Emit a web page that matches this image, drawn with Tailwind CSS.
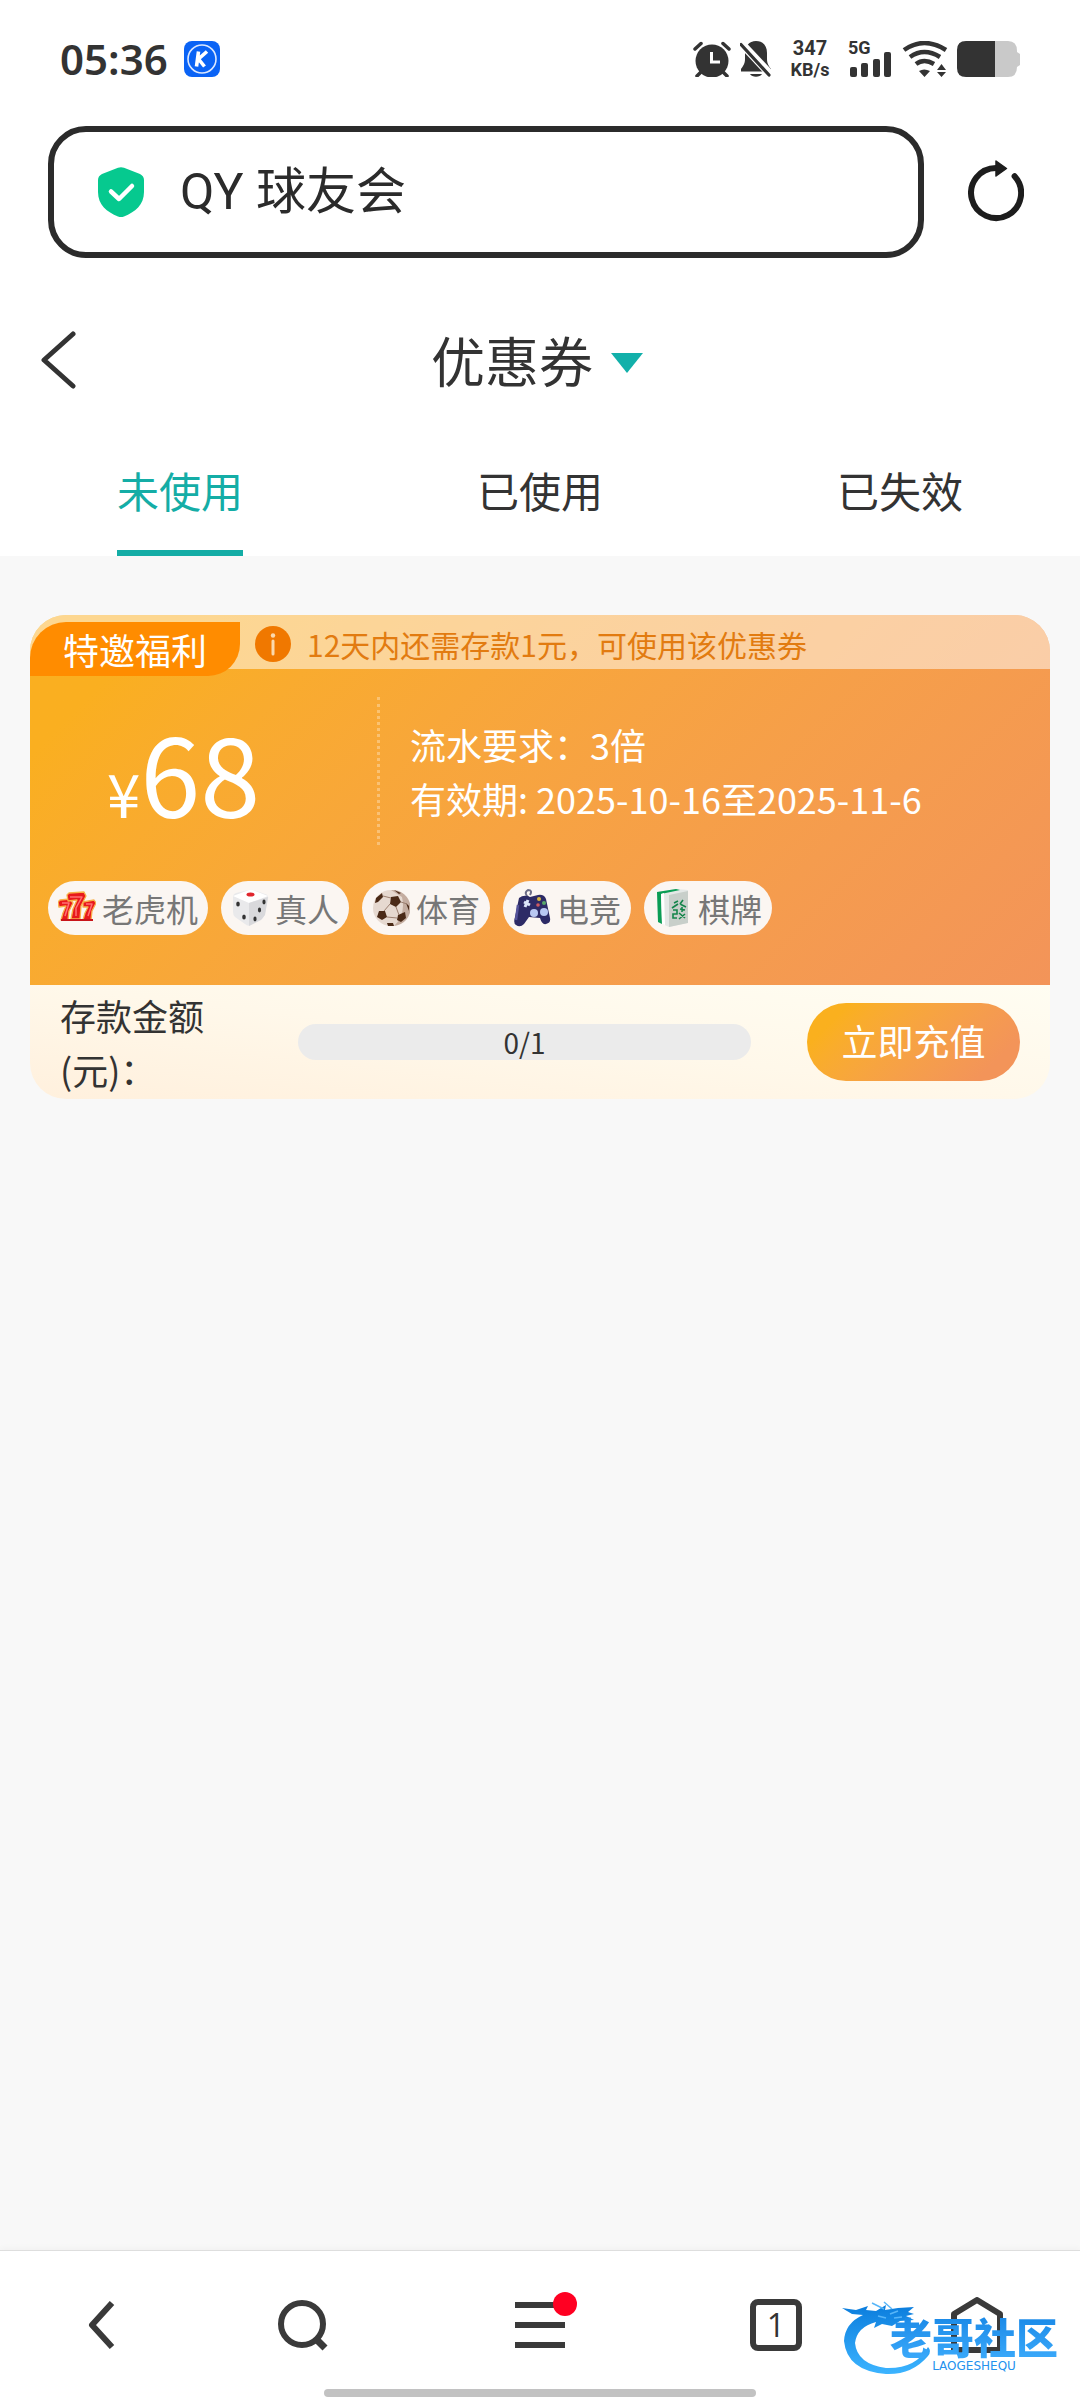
<!DOCTYPE html>
<html lang="zh-CN">
<head>
  <meta charset="UTF-8" />
  <meta name="viewport" content="width=device-width, initial-scale=1.0"/>
  <title>优惠券</title>
  <script src="https://cdn.jsdelivr.net/npm/@tailwindcss/browser@4"></script>
</head>
<body class="min-h-screen flex flex-col bg-[#f8f8f8] text-[#333] font-['Noto_Sans_CJK_SC',sans-serif]">

  <header class="bg-white">

    <!-- Status bar -->
    <div class="flex items-center justify-between pt-9 px-[60px]">
      <div class="flex items-center gap-4">
        <span class="font-['Noto_Sans',sans-serif] font-semibold text-[42px] leading-[45px]">05:36</span>
        <svg class="size-9" viewBox="0 0 36 36">
          <rect width="36" height="36" rx="8" fill="#0a63f5"/>
          <circle cx="18" cy="18" r="14" fill="none" stroke="#dbe8ff" stroke-width="1.6"/>
          <path d="M14.5 10.5L12.5 25.5M23 10.5L14.5 18L20.5 25.5" fill="none" stroke="#fff" stroke-width="3.6"/>
        </svg>
      </div>
      <div class="flex items-center font-['Roboto',sans-serif] font-bold">
        <svg class="w-[38px] h-9" viewBox="0 0 38 36" fill="#333">
          <circle cx="19" cy="20" r="16.5"/>
          <path d="M2 8L8 2.5M36 8L30 2.5M8 31L4 35M30 31L34 35" stroke="#333" stroke-width="3.5" stroke-linecap="round"/>
          <path d="M18.5 11V21H27" fill="none" stroke="#fff" stroke-width="3"/>
        </svg>
        <svg class="ml-[9px] w-8 h-9" viewBox="0 0 32 36" fill="#333">
          <path d="M16 0C9 0 5 5 5 12V18C5 23 3 25 1 28V30.5H31V28C29 25 27 23 27 18V12C27 5 23 0 16 0ZM10 33H22C20 36.5 12 36.5 10 33Z"/>
          <path d="M0 1L30 33" stroke="#fff" stroke-width="8"/>
          <path d="M1 3.5L29 34" stroke="#333" stroke-width="3.2" stroke-linecap="round"/>
        </svg>
        <div class="ml-4 w-[44px] flex flex-col items-center leading-[22px]">
          <span class="text-[20px]">347</span>
          <span class="text-[18px]">KB/s</span>
        </div>
        <div class="relative ml-4 w-[44px] h-9">
          <svg class="w-[44px] h-9" viewBox="0 0 44 36" fill="#333">
            <rect x="2" y="26" width="7" height="10" rx="2"/>
            <rect x="13" y="22" width="7" height="14" rx="2"/>
            <rect x="25" y="18" width="7" height="18" rx="2"/>
            <rect x="36" y="11" width="7" height="25" rx="2"/>
          </svg>
          <span class="absolute left-0 top-0 text-[18px] leading-[14px]">5G</span>
        </div>
        <svg class="ml-[10px] w-[46px] h-9" viewBox="0 0 46 36" fill="none" stroke="#333" stroke-width="4.5">
          <path d="M2 9Q22 -5 44 9M8 16Q22 6 38 16M14 23Q22 17 32 23"/>
          <path d="M17 30Q22 27 28 30L22.5 36ZM35 29H44L39.5 23ZM35 31H44L39.5 36Z" fill="#333" stroke="none"/>
        </svg>
        <svg class="ml-[9px] w-[63px] h-9" viewBox="0 0 63 36">
          <path d="M38 0H51Q60 0 60 10V11L63 13V24L60 26Q60 36 51 36H38Z" fill="#c9c9c9"/>
          <path d="M38 0H9Q0 0 0 9V27Q0 36 9 36H38Z" fill="#333"/>
        </svg>
      </div>
    </div>

    <!-- Address bar -->
    <div class="flex items-center gap-[44px] mt-[45px] pl-12 pr-14">
      <label for="address" class="flex-1 flex items-center gap-9 h-[132px] pl-11 border-6 border-[#2b2b2b] rounded-[38px]">
        <svg class="w-[46px] h-[50px]" viewBox="0 0 46 50">
          <path d="M20 .8Q23 -.5 26 .8L42 7Q46 9 46 13V25C46 38 37 45 26 49.5Q23 50.5 20 49.5C9 45 0 38 0 25V13Q0 9 4 7Z" fill="#06c98f"/>
          <path d="M13 24.5L21 32L34 19" fill="none" stroke="#fff" stroke-width="4.5" stroke-linecap="round" stroke-linejoin="round"/>
        </svg>
        <input id="address" type="text" value="QY 球友会" aria-label="地址栏" class="flex-1 min-w-0 font-['Roboto','Noto_Sans_CJK_SC',sans-serif] text-[50px] leading-[72px] text-[#2b2b2b] outline-none">
      </label>
      <button aria-label="刷新">
        <svg class="w-14 h-16" viewBox="0 0 56 64">
          <path d="M28 8A25 25 0 1 0 46.600 16.200" fill="none" stroke="#1d1d1d" stroke-width="6" stroke-linecap="round"/>
          <path d="M28 1L38.5 8.5L28 16Z" fill="#1d1d1d" stroke="#1d1d1d" stroke-width="1.5" stroke-linejoin="round"/>
        </svg>
      </button>
    </div>

    <!-- Title -->
    <div class="flex items-center h-[120px] mt-[42px]">
      <button aria-label="返回" class="w-24 pl-10">
        <svg class="w-9 h-[58px]" viewBox="0 0 36 58" fill="none" stroke="#333" stroke-width="5" stroke-linecap="round" stroke-linejoin="round">
          <path d="M33 3L4 29L33 55"/>
        </svg>
      </button>
      <div class="flex-1 flex justify-center">
        <button class="flex items-center gap-[18px]">
          <span class="text-[54px] leading-[78px]">优惠券</span>
          <svg class="mt-1.5 w-8 h-5" viewBox="0 0 32 20"><path d="M0 0H32L16 20Z" fill="#12b0aa"/></svg>
        </button>
      </div>
      <div class="w-[102px]"></div>
    </div>

    <!-- Tabs -->
    <nav class="grid grid-cols-3 justify-items-center text-[42px] leading-[64px]">
      <button class="pt-[38px] pb-7 border-b-6 border-[#14ada6] text-[#14ada6]">未使用</button>
      <button class="pt-[38px] pb-7 border-b-6 border-transparent">已使用</button>
      <button class="pt-[38px] pb-7 border-b-6 border-transparent">已失效</button>
    </nav>
  </header>

  <main class="flex-1 px-[30px] pt-[59px]">

    <!-- Coupon -->
    <article class="rounded-[36px] overflow-hidden">
      <div class="relative bg-linear-135 from-[#faaf20] from-10% to-[#f39459] text-white">
        <div class="flex items-center h-[54px] pt-[3px] pl-[225px] bg-white/50 text-[#e27b10]">
          <svg class="size-9" viewBox="0 0 36 36">
            <circle cx="18" cy="18" r="18" fill="#f07800"/>
            <path d="M18 15V28" stroke="#fbd9ad" stroke-width="3" stroke-linecap="round"/>
            <circle cx="18" cy="9.5" r="2.2" fill="#fbd9ad"/>
          </svg>
          <p class="ml-4 text-[30px] leading-[54px]">12天内还需存款1元，可使用该优惠券</p>
        </div>
        <span class="absolute left-0 top-[7px] w-[210px] h-[54px] pl-[33px] bg-[#ff8c00] rounded-tl-[36px] rounded-br-[32px] text-[36px] leading-[54px]">特邀福利</span>

        <div class="flex h-[148px] mt-7">
          <div class="w-[350px] pl-[77px] flex items-baseline border-r-3 border-dotted border-white/30">
            <span class="text-[60px]">¥</span>
            <span class="text-[108px] leading-[148px]">68</span>
          </div>
          <div class="flex-1 flex flex-col justify-center pl-[30px] text-[36px] leading-[54px]">
            <p>流水要求：3倍</p>
            <p>有效期: 2025-10-16至2025-11-6</p>
          </div>
        </div>

        <ul class="flex gap-[13px] mt-9 pl-[18px] pb-[50px] text-[32px] leading-[54px] text-[#777]">
          <li class="flex items-center gap-1.5 px-2.5 rounded-full bg-[#fbf6f2]">
            <svg class="size-[38px]" viewBox="0 0 38 38" stroke-linejoin="round">
              <g fill="#e8191c" stroke="#f8b04a" stroke-width="1.3">
                <path d="M0 13L2 11L12 10L15 14L11 22L10 31H3L5 24L8 17L1 18Z"/>
                <path d="M25 13L36 11L38 14L34 22L33 31H25L27 24L30 18L25 18Z"/>
                <path d="M9 6L11 4L26 3L28 7L23 17L22 30H13L15 20L19 11L10 12Z"/>
              </g>
              <path d="M12 8H24L18 19V27M4 14H11L7 27M28 15H34L30 27" stroke="#ff6f72" stroke-width="1.5" fill="none"/>
              <path d="M3 31H35" stroke="#c8141a" stroke-width="2"/>
            </svg>
            <span>老虎机</span>
          </li>
          <li class="flex items-center gap-1.5 px-2.5 rounded-full bg-[#fbf6f2]">
            <svg class="size-[38px]" viewBox="0 0 38 38">
              <path d="M2 8Q2 5 5 4L18 1Q20 0 22 1L34 5Q38 6 37 10L34 25Q33 28 31 30L20 36Q17 38 14 35L4 28Q2 26 2 23Z" fill="#e9e9eb"/>
              <path d="M2 7L18 1Q20 0 22 1L37 7L18 14Z" fill="#fff"/>
              <path d="M18 14L37 8L34 26L30 31L18 37Z" fill="#d9d9dc"/>
              <ellipse cx="19.5" cy="5.5" rx="4" ry="2" fill="#e0262e"/>
              <g fill="#333"><ellipse cx="7" cy="15" rx="1.8" ry="2.6"/><ellipse cx="13" cy="28" rx="1.8" ry="2.6"/><ellipse cx="33" cy="13" rx="1.6" ry="2.4"/><ellipse cx="28.5" cy="21" rx="1.6" ry="2.4"/><ellipse cx="24" cy="30" rx="1.6" ry="2.4"/></g>
            </svg>
            <span>真人</span>
          </li>
          <li class="flex items-center gap-1.5 px-2.5 rounded-full bg-[#fbf6f2]">
            <svg class="size-[38px]" viewBox="0 0 38 38">
              <circle cx="19" cy="19" r="18" fill="#e6d9d0"/>
              <path d="M19 1A18 18 0 0 1 22 37Q34 26 30 8Z" fill="#c4ada0"/>
              <g fill="#4a2a17"><path d="M19 8L26 7L29 13L24 18L18 15Z"/><path d="M7 22L13 22L15 28L10 31L5 28Z"/><path d="M26 26L33 23L34 29L29 33L25 31Z"/><path d="M4 9L10 4L11 8L6 13L3 14Z"/><path d="M15 34L21 34L22 37L16 37Z"/><path d="M22 1L29 4L27 5Z"/><path d="M34 14L37 17V22Z"/></g>
              <path d="M11 7L19 9M18 15L12 22M24 18L27 26M29 13L35 15M15 28L25 29" stroke="#9b7f70" fill="none"/>
            </svg>
            <span>体育</span>
          </li>
          <li class="flex items-center gap-1.5 px-2.5 rounded-full bg-[#fbf6f2]">
            <svg class="size-[38px]" viewBox="0 0 38 38">
              <path d="M16 9Q10 4 15 1Q20 1 17 6" fill="none" stroke="#6c6c86" stroke-width="2"/>
              <path d="M6 9Q11 5 17 8L25 6Q31 5 33 10L37 29Q38 34 33 35Q29 36 27 29L16 28L11 35Q7 39 3 36Q0 34 2 28Z" fill="#2d2b66"/>
              <path d="M5 16L3 31" stroke="#55539a" stroke-width="2.5"/>
              <path d="M11 13L17 16M15 11L12 18" stroke="#dce6fa" stroke-width="3"/>
              <circle cx="26" cy="10" r="2" fill="#d9b840"/><circle cx="31" cy="14" r="2" fill="#58a86a"/><circle cx="25" cy="16" r="1.8" fill="#d05a60"/>
              <circle cx="21" cy="24" r="4" fill="#b9c8f2"/><circle cx="31" cy="23" r="4" fill="#b9c8f2"/>
            </svg>
            <span>电竞</span>
          </li>
          <li class="flex items-center gap-1.5 px-2.5 rounded-full bg-[#fbf6f2]">
            <svg class="size-[38px]" viewBox="0 0 38 38">
              <path d="M3 3L22 0L34 1L33 34L15 38L4 33Z" fill="#e4e8e6"/>
              <path d="M3 3L22 0L26 1L7 5L8 35L4 33Z" fill="#0a9d55"/>
              <path d="M7 5L10 4L11 36L8 35Z" fill="#fff"/>
              <path d="M15 6L34 2V34L15 38Z" fill="#c8cfca"/>
              <path d="M20 14L24 12M29 11L26 15M18 19L24 15M26 15L32 18M19 21H23V25H19V29H23M26 20L31 21M28 18V23M25 24L31 29M31 25L25 30" stroke="#14854a" stroke-width="1.6" fill="none"/>
            </svg>
            <span>棋牌</span>
          </li>
        </ul>
      </div>

      <div class="flex items-center h-[114px] px-[30px] bg-linear-to-tr from-[#fff0dd] via-[#fff8ea] to-[#fffdf2]">
        <p class="w-[180px] text-[36px] leading-[54px]">存款金额<br>(元)：</p>
        <div role="progressbar" aria-valuenow="0" aria-valuemax="1" aria-label="存款金额" class="flex-1 ml-[58px] mr-14 h-9 rounded-full bg-[#ebebeb] text-center text-[28px] leading-9">0/1</div>
        <button class="w-[213px] h-[78px] pb-1 rounded-full bg-linear-135 from-[#fab01e] from-15% to-[#f39459] to-85% text-white text-[36px]">立即充值</button>
      </div>
    </article>
  </main>

  <!-- Browser toolbar -->
  <footer class="relative bg-white border-t border-[#dedede] shadow-[0_-2px_6px_rgba(0,0,0,0.03)]">
    <div class="grid grid-cols-[202fr_200fr_276fr_196fr_206fr] place-items-center h-[138px] pt-2.5">
      <button aria-label="后退">
        <svg class="w-7 h-12" viewBox="0 0 28 48" fill="none" stroke="#3a3a3a" stroke-width="6" stroke-linejoin="round">
          <path d="M25 2L5 24L25 46"/>
        </svg>
      </button>
      <button aria-label="搜索">
        <svg class="size-[52px]" viewBox="0 0 52 52" fill="none" stroke="#3a3a3a" stroke-width="6">
          <circle cx="26" cy="25" r="21"/>
          <path d="M39 39L49 49" stroke-width="7"/>
        </svg>
      </button>
      <button aria-label="菜单" class="relative">
        <svg class="w-[50px] h-[46px]" viewBox="0 0 50 46" fill="#3a3a3a">
          <path d="M0 0H50V6H0ZM0 20H50V26H0ZM0 40H50V46H0Z"/>
        </svg>
        <span class="absolute -right-3 -top-2.5 size-6 rounded-full bg-[#ff0022]"></span>
      </button>
      <button aria-label="标签页" class="size-[52px] border-6 border-[#3a3a3a] rounded-lg font-['Open_Sans',sans-serif] text-[32px] leading-10">1</button>
      <button aria-label="主页">
        <svg class="w-[52px] h-14" viewBox="0 0 52 56" fill="none" stroke="#3a3a3a" stroke-width="6" stroke-linejoin="round">
          <path d="M3 17L26 3L49 17V53H3Z"/>
        </svg>
      </button>
    </div>
    <div class="w-[432px] h-2 mx-auto mb-[3px] rounded-full bg-[#c2c2c2]"></div>

    <!-- Community mark -->
    <div class="absolute right-4 top-[50px] w-[222px] h-[76px] text-[#2492ee]">
      <svg class="absolute inset-0 w-[222px] h-[76px]" viewBox="0 0 222 76">
        <defs>
          <linearGradient id="dragon" x1="0" y1="0" x2="0" y2="1">
            <stop offset="0" stop-color="#0b7ddd"/>
            <stop offset="1" stop-color="#3cb4ff"/>
          </linearGradient>
        </defs>
        <path d="M0 7L14 9L26 5L24 9L34 10L44 4L43 9L56 7L72 6L66 11L72 13L64 15L72 19L58 20L50 25L40 23L32 27L34 21Q15 26 13 42Q15 63 44 67Q74 68 86 46Q90 50 86 55Q70 74 44 73Q5 70 2 40Q3 22 21 14L10 13Z" fill="url(#dragon)"/>
        <path d="M30 2L42 8M42 1L50 8M48 13L56 10M36 15L44 17M52 17L60 16" stroke="#58b6f8" stroke-width="1.5" fill="none"/>
      </svg>
      <div class="absolute right-0 top-3 w-[180px] flex flex-col items-center whitespace-nowrap">
        <span class="font-black text-[42px] leading-[46px] bg-linear-to-b from-[#1787e6] to-[#3aa9fa] bg-clip-text text-transparent">老哥社区</span>
        <span class="font-['DejaVu_Sans',sans-serif] text-[12px] leading-[14px]">LAOGESHEQU</span>
      </div>
    </div>
  </footer>

</body>
</html>
